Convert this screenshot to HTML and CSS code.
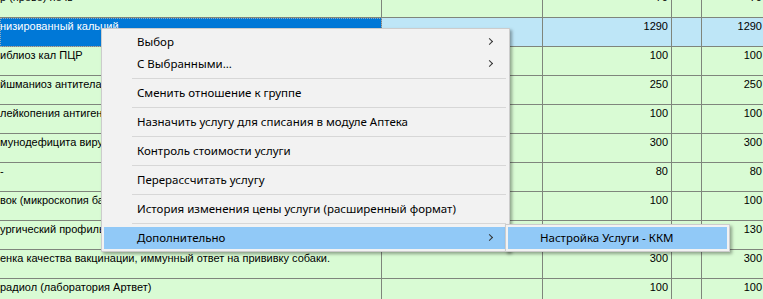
FILE: index.html
```html
<!DOCTYPE html>
<html lang="ru">
<head>
    <meta charset="UTF-8">
    <title>Услуги</title>
    <link rel="stylesheet" href="styles.css">
</head>
<body>
    <div class="viewport">
        <div class="grid">
            <div class="row">
                <div class="cell">р (прово) ночь</div>
                <div class="cell"></div>
                <div class="cell num">70</div>
                <div class="cell"></div>
                <div class="cell num">70</div>
            </div>
            <div class="row selected">
                <div class="cell focused">низированный кальций</div>
                <div class="cell"></div>
                <div class="cell num">1290</div>
                <div class="cell"></div>
                <div class="cell num">1290</div>
            </div>
            <div class="row">
                <div class="cell">иблиоз кал ПЦР</div>
                <div class="cell"></div>
                <div class="cell num">100</div>
                <div class="cell"></div>
                <div class="cell num">100</div>
            </div>
            <div class="row">
                <div class="cell">йшманиоз антитела</div>
                <div class="cell"></div>
                <div class="cell num">250</div>
                <div class="cell"></div>
                <div class="cell num">250</div>
            </div>
            <div class="row">
                <div class="cell">лейкопения антиген</div>
                <div class="cell"></div>
                <div class="cell num">100</div>
                <div class="cell"></div>
                <div class="cell num">100</div>
            </div>
            <div class="row">
                <div class="cell">мунодефицита вируса</div>
                <div class="cell"></div>
                <div class="cell num">300</div>
                <div class="cell"></div>
                <div class="cell num">300</div>
            </div>
            <div class="row">
                <div class="cell">-</div>
                <div class="cell"></div>
                <div class="cell num">80</div>
                <div class="cell"></div>
                <div class="cell num">80</div>
            </div>
            <div class="row">
                <div class="cell">вок (микроскопия бактерий)</div>
                <div class="cell"></div>
                <div class="cell num">100</div>
                <div class="cell"></div>
                <div class="cell num">100</div>
            </div>
            <div class="row">
                <div class="cell">ургический профиль</div>
                <div class="cell"></div>
                <div class="cell num">130</div>
                <div class="cell"></div>
                <div class="cell num">130</div>
            </div>
            <div class="row">
                <div class="cell">енка качества вакцинации, иммунный ответ на прививку собаки.</div>
                <div class="cell"></div>
                <div class="cell num">300</div>
                <div class="cell"></div>
                <div class="cell num">300</div>
            </div>
            <div class="row">
                <div class="cell">радиол (лаборатория Артвет)</div>
                <div class="cell"></div>
                <div class="cell num">100</div>
                <div class="cell"></div>
                <div class="cell num">100</div>
            </div>
        </div>

        <div class="menu context-menu">
            <div class="item has-sub">Выбор</div>
            <div class="item has-sub">С Выбранными...</div>
            <div class="separator"></div>
            <div class="item">Сменить отношение к группе</div>
            <div class="separator"></div>
            <div class="item">Назначить услугу для списания в модуле Аптека</div>
            <div class="separator"></div>
            <div class="item">Контроль стоимости услуги</div>
            <div class="separator"></div>
            <div class="item">Перерассчитать услугу</div>
            <div class="separator"></div>
            <div class="item">История изменения цены услуги (расширенный формат)</div>
            <div class="separator"></div>
            <div class="item has-sub active">Дополнительно</div>
        </div>

        <div class="menu sub-menu">
            <div class="item active">Настройка Услуги - ККМ</div>
        </div>
    </div>
</body>
</html>
```
FILE: styles.css
```css
body {
    margin: 0;
    overflow: hidden;
    background: #d9fbd4;
}

.viewport {
    position: relative;
    width: 763px;
    height: 299px;
    overflow: hidden;
}

/* grid is scrolled: first row is partly hidden */
.grid {
    margin-top: -11px;
    font-family: "Liberation Sans", Arial, sans-serif;
    font-size: 11px;
    color: #000;
}

.row {
    display: grid;
    grid-template-columns: 382px 161px 129px 30px 64px;
    height: 29px;
    background: #d9fbd4;
}

.cell {
    box-sizing: border-box;
    height: 29px;
    padding: 2px 3px 0 0;
    line-height: 13px;
    border-right: 1px solid #7f857c;
    border-bottom: 1px solid #7f857c;
    white-space: nowrap;
    overflow: hidden;
}

.num {
    text-align: right;
}

.row.selected {
    background: #bee6f7;
}

.cell.focused {
    background: #0078d7;
    color: #fff;
    outline: 1px dotted #9ab;
    outline-offset: -1px;
}

/* windows 10 popup menus */
.menu {
    position: absolute;
    box-sizing: border-box;
    background: #f2f2f2;
    border: 1px solid #cccccc;
    padding: 2px;
    font-family: "Noto Sans", "Open Sans", sans-serif;
    font-size: 11.5px;
    color: #000;
    box-shadow: 2px 2px 3px rgba(0, 0, 0, 0.35);
}

.context-menu {
    left: 101px;
    top: 28px;
    width: 409px;
}

.sub-menu {
    left: 505px;
    top: 224px;
    width: 225px;
}

.item {
    position: relative;
    height: 22px;
    line-height: 22px;
    padding-left: 33px;
    white-space: nowrap;
}

.sub-menu .item {
    padding-left: 32px;
}

.item.active {
    background: #91c9f7;
}

.has-sub::after {
    content: "";
    position: absolute;
    right: 15px;
    top: 8px;
    width: 4px;
    height: 4px;
    border-top: 1px solid #333;
    border-right: 1px solid #333;
    transform: rotate(45deg);
}

.separator {
    height: 1px;
    margin: 3px 1px 3px 28px;
    background: #d7d7d7;
}
```
